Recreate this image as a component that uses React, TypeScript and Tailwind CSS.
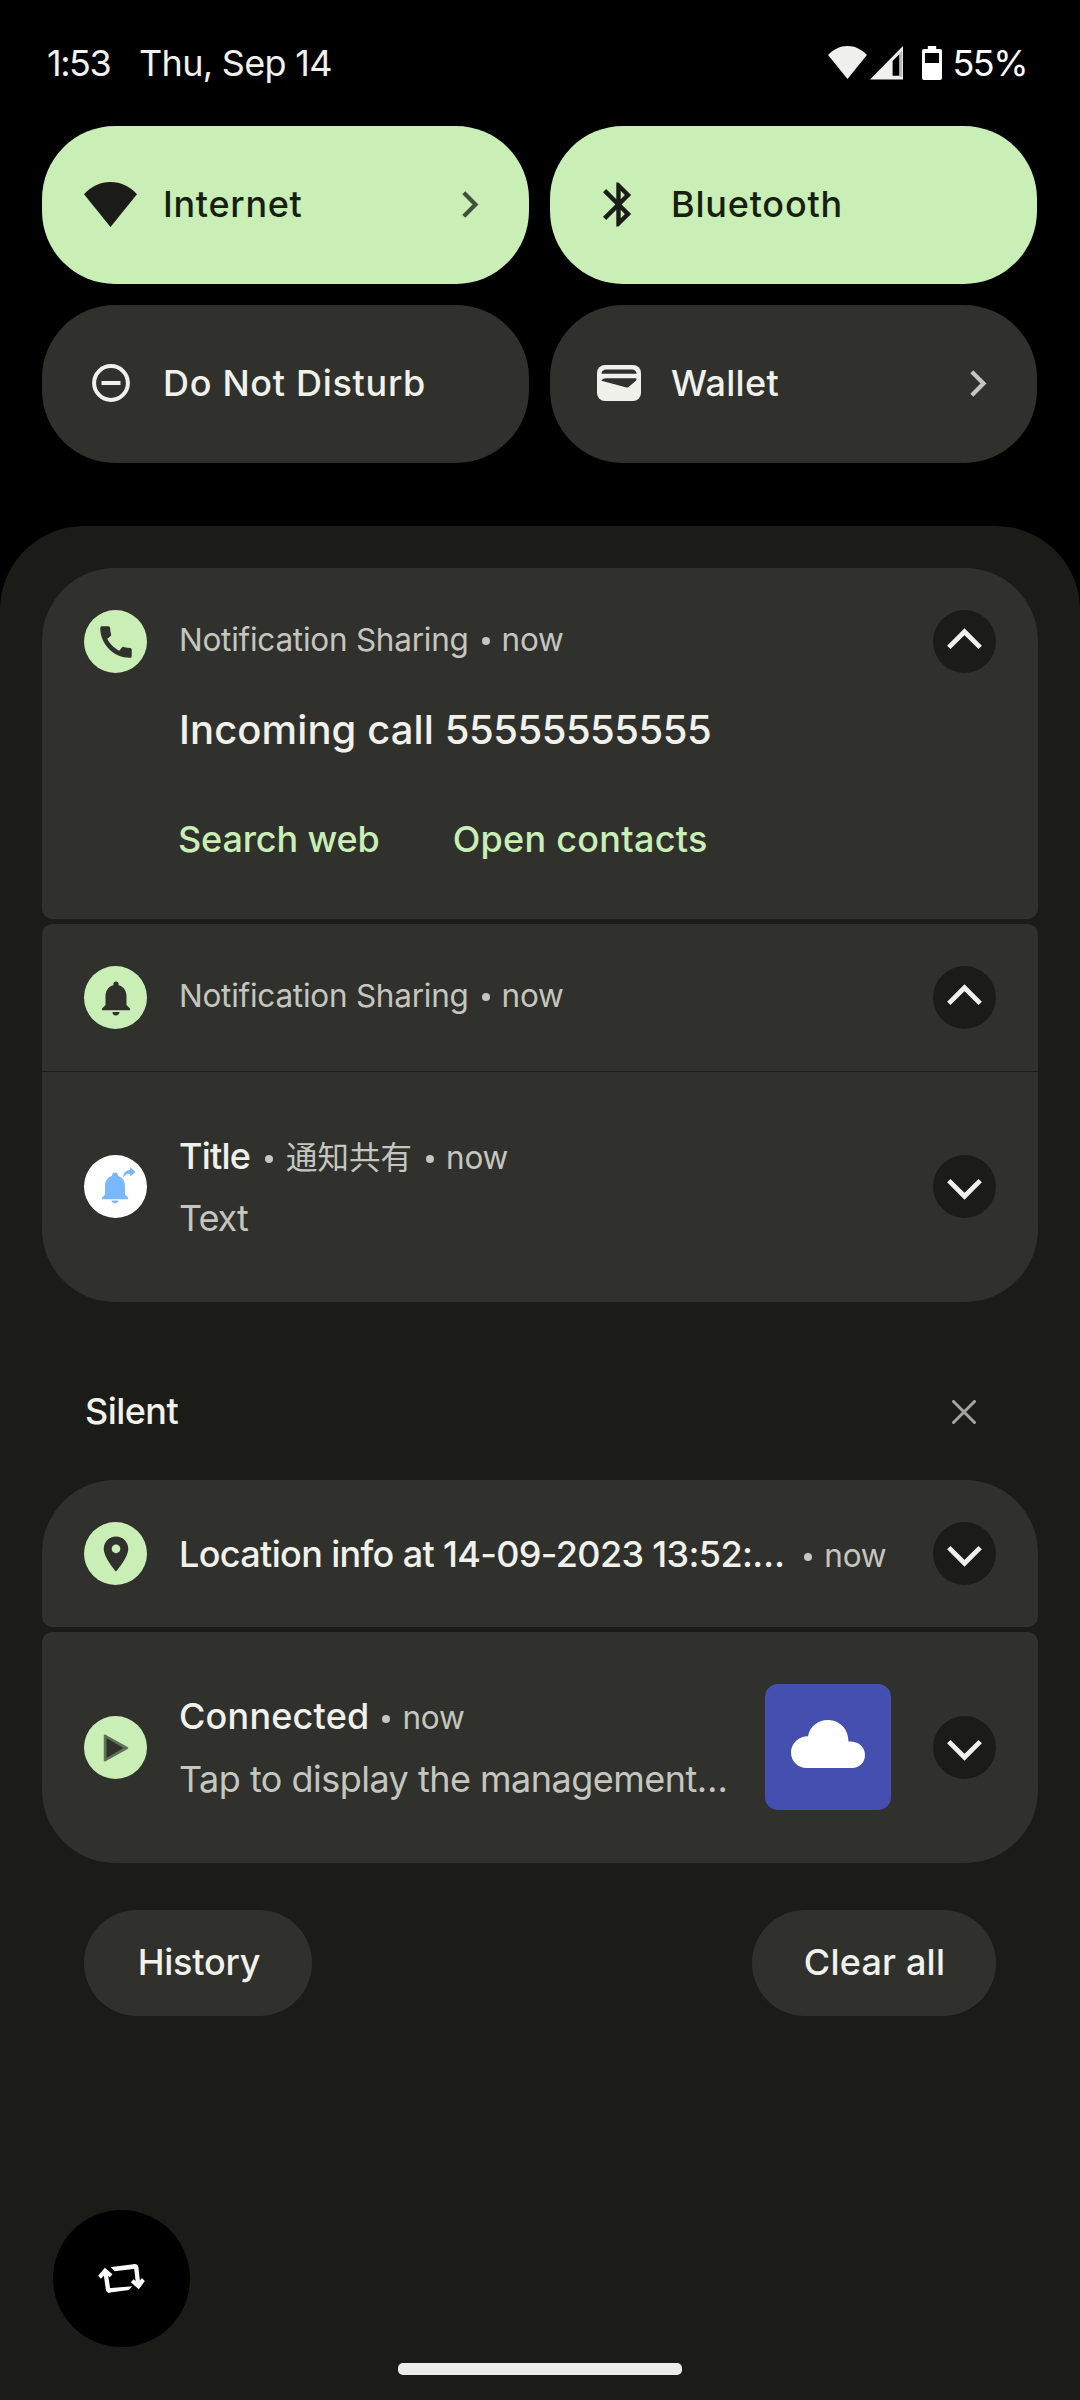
import React from 'react';
import { MdBluetooth, MdCall, MdNotifications, MdPlace } from 'react-icons/md';

type Kids = { children?: React.ReactNode };

const WifiShape = ({ className }: { className: string }) => (
  <svg viewBox="0 0 53 45" className={className} fill="currentColor">
    <path d="M0 12.2C7 4.6 16.4 0 26.5 0S46 4.6 53 12.2L26.5 45Z" />
  </svg>
);

const SignalIcon = () => (
  <svg viewBox="0 0 33 34" className="h-[34px] w-[33px]">
    <path d="M0 33.5L33 0V33.5Z" fill="#f0f1ec" />
    <path d="M29.7 7L32.2 4.5V30.8H29.7Z" fill="#b9bab5" />
    <path d="M22.6 15L29.3 8.3V29.8H22.6Z" fill="#000" />
  </svg>
);

const BatteryIcon = () => (
  <svg viewBox="0 0 20 34" className="h-[34px] w-5">
    <path d="M5.8 0H14.2V3H18A2 2 0 0 1 20 5V32A2 2 0 0 1 18 34H2A2 2 0 0 1 0 32V5A2 2 0 0 1 2 3H5.8Z" fill="#fff" />
    <rect x="3" y="7" width="14" height="10" fill="#000" />
  </svg>
);

const DndIcon = () => (
  <svg viewBox="0 0 38 38" className="size-[38px]" fill="none" stroke="#f0f1eb" strokeWidth="4">
    <circle cx="19" cy="19" r="16.9" />
    <path d="M9.5 19H28.5" />
  </svg>
);

const WalletIcon = () => (
  <svg viewBox="0 0 44 36" className="h-9 w-11">
    <rect width="44" height="36" rx="8" fill="#f0f1eb" />
    <path d="M4.4 8.8C4.6 6 6.3 4.4 9 4.4H35C37.7 4.4 39.4 6 39.6 8.8Z" fill="#30312d" />
    <path d="M4.4 15.8C5.2 14 6.8 13.2 9 13.2H39.4V15.2L31.6 22C31 22.5 30.3 22.6 29.6 22.4Z" fill="#30312d" />
  </svg>
);

const RightChevron = ({ className }: { className: string }) => (
  <svg viewBox="0 0 17 27" className={`h-[27px] w-[17px] ${className}`} fill="none" stroke="currentColor" strokeWidth="4.2">
    <path d="M1.8 1.8L13.5 13.5L1.8 25.2" />
  </svg>
);

const BlueBell = () => (
  <svg viewBox="0 0 63 63" className="size-[63px]" fill="#7ab7fb">
    <path d="M31 17.6c-1.7 0-3 1.2-3 2.800v.7c-4.700 1.300-7 5.300-7 10v8.400l-3 3v1.800h26v-1.800l-3-3v-8.400c0-4.700-2.300-8.700-7-10v-.7c0-1.600-1.300-2.800-3-2.800Z" />
    <path d="M27.500 45.500h7c-.3 1.700-1.700 2.800-3.500 2.800s-3.200-1.100-3.500-2.800Z" />
    <path d="M39 22.500c.2-4.600 2.800-7.300 7-7.600v-2.900l5.600 5-5.600 4.600v-2.900c-3-.2-5.200 1-7 3.800Z" />
  </svg>
);

const PlayIcon = () => (
  <svg viewBox="0 0 26 30" className="h-[30px] w-[26px]" strokeLinejoin="round">
    <path d="M2 2.800L24 15L2 27.200Z" fill="#5f7257" stroke="#5f7257" strokeWidth="2.500" />
    <path d="M3.500 5L20.500 15L3.500 25Z" fill="#30312d" />
  </svg>
);

const CloudIcon = () => (
  <svg viewBox="0 0 74 48" className="h-12 w-[74px]" fill="#fff">
    <path d="M15.500 48C7 48 0 41.300 0 32.500S7.500 16.300 17 16.300C18.500 7 26.500 0 36.800 0C48 0 57.500 8.500 57.500 21.600C67 21 74 26.500 74 35C74 42.500 68.500 48 61 48Z" />
  </svg>
);

const RotateIcon = () => (
  <svg viewBox="170 185 152 105" className="h-[35px] w-[51px]" fill="none" stroke="#fff" strokeWidth="13">
    <path d="M198 218L206 273" />
    <path d="M206 267V280L268 272L278 261L206 267Z" fill="#fff" stroke="none" />
    <path d="M200 272a8 8 0 0 0 7 8l6 -1v-12h-13Z" fill="#fff" stroke="none" />
    <path d="M214 204L225 216L288 208V194L216 203Z" fill="#fff" stroke="none" />
    <path d="M282 194.500h6a8 8 0 0 1 8 7v6h-14Z" fill="#fff" stroke="none" />
    <path d="M290 203L296 255" />
    <path d="M196 205L219 225L211 234L198 224L184 238L176 229Z" fill="#fff" stroke="none" />
    <path d="M298 270L274 249L282 240L296 250L307 236L316 245Z" fill="#fff" stroke="none" />
  </svg>
);

const Tile = ({ on, icon, label, chevron }: { on?: boolean; icon: React.ReactNode; label: React.ReactNode; chevron?: boolean }) => (
  <div
    className={`flex h-[158px] items-center rounded-[73px] pr-[50px] pb-[2px] pl-[42px] ${
      on ? 'bg-[#c9eeb6] text-[#171e12]' : 'bg-[#30312d] text-[#f0f1eb]'
    }`}
  >
    <div className="flex w-[53px] shrink-0 justify-center">{icon}</div>
    <div className="ml-[26px] flex-1 text-[36px] leading-[50px] font-medium whitespace-nowrap">{label}</div>
    {chevron && <RightChevron className={on ? 'text-[#43503d]' : 'text-[#c5c7c0]'} />}
  </div>
);

const Expand = ({ up }: { up?: boolean }) => (
  <svg viewBox="0 0 63 63" className="size-[63px] shrink-0">
    <circle cx="31.5" cy="31.5" r="31.5" fill="#1b1c18" />
    <path d={up ? 'M15.800 37.400L31.500 21.700L47.200 37.400' : 'M15.800 25.600L31.500 41.300L47.200 25.600'} fill="none" stroke="#f0f1eb" strokeWidth="4.800" />
  </svg>
);

const Badge = ({ children, white }: Kids & { white?: boolean }) => (
  <div
    className={`mr-8 flex size-[63px] shrink-0 items-center justify-center rounded-full text-[42px] text-[#30312d] ${
      white ? 'bg-white' : 'bg-[#c9eeb6]'
    }`}
  >
    {children}
  </div>
);

const Dot = ({ className }: { className: string }) => (
  <div className={`h-[14px] w-2 shrink-0 ${className}`}>
    <div className="size-2 rounded-full bg-[#c4c6bf]" />
  </div>
);

const Small = ({ children }: Kids) => <span className="text-[31.5px] tracking-[-0.25px] whitespace-nowrap text-[#c4c6bf]">{children}</span>;

const Line = ({ children, className = '' }: Kids & { className?: string }) => (
  <div className={`flex h-[50px] items-baseline text-[36px] leading-[50px] whitespace-nowrap text-[#f0f1eb] ${className}`}>{children}</div>
);

const SharingHeader = ({ icon }: { icon: React.ReactNode }) => (
  <div className="flex items-center">
    <Badge>{icon}</Badge>
    <Line className="mb-[3px] flex-1">
      <Small>Notification Sharing</Small>
      <Dot className="mr-3 ml-[13px]" />
      <Small>now</Small>
    </Line>
    <Expand up />
  </div>
);

export default function App() {
  return (
    <div className="relative flex h-[2400px] w-[1080px] flex-col overflow-hidden bg-black font-[Inter,'Noto_Sans_CJK_JP',sans-serif]">
      <header className="flex h-[126px] items-center pr-[53px] pb-px pl-[47px] text-[36px] leading-[50px] text-[#f0f1ec]">
        <span className="w-[92px] tracking-[-1.5px]">1:53</span>
        <span className="flex-1 tracking-[-0.7px]">Thu, Sep 14</span>
        <WifiShape className="h-[33px] w-[39px]" />
        <div className="ml-[3px]">
          <SignalIcon />
        </div>
        <div className="ml-[19px]">
          <BatteryIcon />
        </div>
        <span className="ml-[10px] tracking-[-1.5px] text-white">55%</span>
      </header>

      <section className="grid grid-cols-[487px_487px] gap-[21px] px-[42px]">
        <Tile on chevron icon={<WifiShape className="h-[45px] w-[53px] text-[#1b1c18]" />} label={<span className="tracking-[0.7px]">Internet</span>} />
        <Tile on icon={<MdBluetooth className="size-[53px] shrink-0 text-[#1b1c18]" />} label={<span className="tracking-[0.79px]">Bluetooth</span>} />
        <Tile icon={<DndIcon />} label={<span className="tracking-[0.7px]">Do Not Disturb</span>} />
        <Tile chevron icon={<WalletIcon />} label={<span className="tracking-[0.3px]">Wallet</span>} />
      </section>

      <main className="mt-[63px] flex flex-1 flex-col rounded-t-[84px] bg-[#1b1c18] px-[42px] pt-[42px]">
        <article className="h-[351px] rounded-t-[73px] rounded-b-[10px] bg-[#30312d] px-[42px] pt-[42px]">
          <SharingHeader icon={<MdCall />} />
          <div className="mt-[31px] ml-[95px] text-[40px] leading-[51px] font-medium tracking-[0.1px] whitespace-nowrap text-[#f0f1eb]">
            Incoming call <span className="tracking-[-0.5px]">55555555555</span>
          </div>
          <div className="mt-[59px] ml-[94px] flex gap-[73px] text-[36px] leading-[50px] font-medium whitespace-nowrap text-[#c9eeb6]">
            <span className="tracking-[-0.15px]">Search web</span>
            <span className="tracking-[0.28px]">Open contacts</span>
          </div>
        </article>

        <article className="mt-[5px] h-[378px] rounded-t-[10px] rounded-b-[73px] bg-[#30312d]">
          <div className="h-[148px] border-b border-[#1b1c18] px-[42px] pt-[42px]">
            <SharingHeader icon={<MdNotifications />} />
          </div>
          <div className="flex h-[229px] items-center px-[42px]">
            <Badge white>
              <BlueBell />
            </Badge>
            <div className="flex-1">
              <Line>
                <span className="font-medium tracking-[-0.8px]">Title</span>
                <Dot className="mr-[13px] ml-[15px]" />
                <span className="font-['Noto_Sans_CJK_JP'] text-[31.5px] leading-[50px] text-[#c4c6bf]">通知共有</span>
                <Dot className="mr-3 ml-[14px]" />
                <Small>now</Small>
              </Line>
              <Line className="mt-[13px]">
                <span className="tracking-[-1px] text-[#c4c6bf]">Text</span>
              </Line>
            </div>
            <Expand />
          </div>
        </article>

        <div className="flex h-[178px] items-center px-[42px] pt-[41px]">
          <span className="flex-1 pb-[2px] pl-px text-[36px] leading-[50px] font-medium tracking-[-0.55px] text-[#f0f1eb]">Silent</span>
          <svg viewBox="0 0 24 24" className="mr-5 size-6" stroke="#a3a5a3" strokeWidth="3" strokeLinecap="round">
            <path d="M1.500 1.500L22.500 22.500M22.500 1.500L1.500 22.500" />
          </svg>
        </div>

        <article className="flex h-[147px] items-center rounded-t-[73px] rounded-b-[10px] bg-[#30312d] px-[42px]">
          <Badge>
            <MdPlace />
          </Badge>
          <Line className="flex-1">
            <span className="font-medium tracking-[-0.65px]">Location info at 14-09-2023 13:52:…</span>
            <Dot className="mr-3 ml-[20px]" />
            <Small>now</Small>
          </Line>
          <Expand />
        </article>

        <article className="mt-[5px] flex h-[231px] items-center rounded-t-[10px] rounded-b-[73px] bg-[#30312d] px-[42px]">
          <Badge>
            <PlayIcon />
          </Badge>
          <div className="flex-1 pb-px">
            <Line>
              <span className="font-medium tracking-[0.2px]">Connected</span>
              <Dot className="mr-3 ml-[13px]" />
              <Small>now</Small>
            </Line>
            <Line className="mt-[13px]">
              <span className="tracking-[-0.52px] text-[#c4c6bf]">Tap to display the management…</span>
            </Line>
          </div>
          <div className="mr-[42px] mb-px flex size-[126px] shrink-0 items-center justify-center rounded-[13px] bg-[#454fb0] pr-px pb-[6px]">
            <CloudIcon />
          </div>
          <Expand />
        </article>

        <div className="mt-[47px] flex justify-between px-[42px] text-[36px] leading-[50px] font-medium whitespace-nowrap text-[#f0f1eb]">
          <button className="flex h-[106px] w-[228px] items-center justify-center rounded-full bg-[#30312d] pb-[2px] pl-[2px] tracking-[-0.2px]">History</button>
          <button className="flex h-[106px] w-[244px] items-center justify-center rounded-full bg-[#30312d] pb-[2px] pl-px tracking-[0.2px]">Clear all</button>
        </div>

        <div className="mt-auto mb-[25px] h-[12px] w-[284px] self-center rounded-[5px] bg-[#ebedea]" />
      </main>

      <button className="absolute top-[2210px] left-[53px] flex size-[137px] items-center justify-center rounded-full bg-black">
        <RotateIcon />
      </button>
    </div>
  );
}
